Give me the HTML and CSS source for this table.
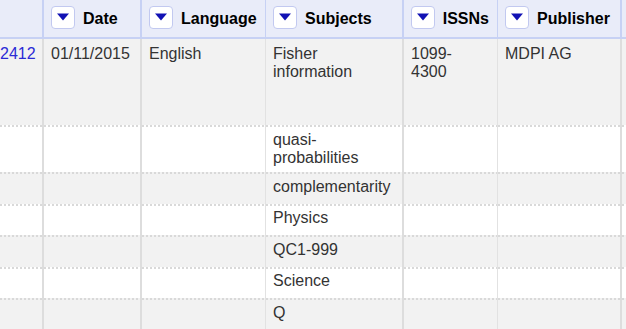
FILE: index.html
```html
<!DOCTYPE html>
<html>
<head>
<meta charset="utf-8">
<link rel="stylesheet" href="styles.css">
</head>
<body>
<div class="viewport">
<table class="data-table">
  <colgroup>
    <col class="w0"><col class="w1"><col class="w2"><col class="w3"><col class="w4"><col class="w5"><col class="w6">
  </colgroup>
  <thead>
    <tr>
      <th class="thick"></th>
      <th class="thick"><div class="head"><span class="menu-btn"><svg width="14" height="8" viewBox="0 0 14 8"><path d="M1 0.5 L13 0.5 L7 7.5 Z" fill="#1212b4"/></svg></span><span>Date</span></div></th>
      <th class="thin"><div class="head"><span class="menu-btn"><svg width="14" height="8" viewBox="0 0 14 8"><path d="M1 0.5 L13 0.5 L7 7.5 Z" fill="#1212b4"/></svg></span><span>Language</span></div></th>
      <th class="thick"><div class="head"><span class="menu-btn"><svg width="14" height="8" viewBox="0 0 14 8"><path d="M1 0.5 L13 0.5 L7 7.5 Z" fill="#1212b4"/></svg></span><span>Subjects</span></div></th>
      <th class="thin"><div class="head"><span class="menu-btn"><svg width="14" height="8" viewBox="0 0 14 8"><path d="M1 0.5 L13 0.5 L7 7.5 Z" fill="#1212b4"/></svg></span><span>ISSNs</span></div></th>
      <th class="thick"><div class="head"><span class="menu-btn"><svg width="14" height="8" viewBox="0 0 14 8"><path d="M1 0.5 L13 0.5 L7 7.5 Z" fill="#1212b4"/></svg></span><span>Publisher</span></div></th>
      <th class="thin"></th>
    </tr>
  </thead>
  <tbody>
    <tr class="odd first">
      <td class="thick id"><a href="#">2412</a></td>
      <td class="thick">01/11/2015</td>
      <td class="thin">English</td>
      <td class="thick">Fisher information</td>
      <td class="thin issn">1099-4300</td>
      <td class="thick">MDPI AG</td>
      <td class="thin"></td>
    </tr>
    <tr class="even">
      <td class="thick"></td><td class="thick"></td><td class="thin"></td>
      <td class="thick">quasi-probabilities</td>
      <td class="thin issn"></td><td class="thick"></td><td class="thin"></td>
    </tr>
    <tr class="odd">
      <td class="thick"></td><td class="thick"></td><td class="thin"></td>
      <td class="thick">complementarity</td>
      <td class="thin issn"></td><td class="thick"></td><td class="thin"></td>
    </tr>
    <tr class="even">
      <td class="thick"></td><td class="thick"></td><td class="thin"></td>
      <td class="thick">Physics</td>
      <td class="thin issn"></td><td class="thick"></td><td class="thin"></td>
    </tr>
    <tr class="odd">
      <td class="thick"></td><td class="thick"></td><td class="thin"></td>
      <td class="thick">QC1-999</td>
      <td class="thin issn"></td><td class="thick"></td><td class="thin"></td>
    </tr>
    <tr class="even">
      <td class="thick"></td><td class="thick"></td><td class="thin"></td>
      <td class="thick">Science</td>
      <td class="thin issn"></td><td class="thick"></td><td class="thin"></td>
    </tr>
    <tr class="odd">
      <td class="thick"></td><td class="thick"></td><td class="thin"></td>
      <td class="thick">Q</td>
      <td class="thin issn"></td><td class="thick"></td><td class="thin"></td>
    </tr>
  </tbody>
</table>
</div>
</body>
</html>
```

FILE: styles.css
```css
html, body {
  margin: 0;
  padding: 0;
  background: #ffffff;
}

.viewport {
  width: 626px;
  height: 329px;
  overflow: hidden;
}

.data-table {
  border-collapse: separate;
  border-spacing: 0;
  table-layout: fixed;
  width: 700px;
  font-family: "Liberation Sans", Arial, sans-serif;
  font-size: 16px;
  color: #333333;
}

.w0 { width: 44px; }
.w1 { width: 98px; }
.w2 { width: 124px; }
.w3 { width: 138px; }
.w4 { width: 94px; }
.w5 { width: 124px; }
.w6 { width: 78px; }

.data-table th {
  height: 37px;
  padding: 0 8px 0 7px;
  background: #e9ecf9;
  border-bottom: 2px solid #c7d1f4;
  text-align: left;
  font-weight: bold;
  color: #000000;
  white-space: nowrap;
  overflow: hidden;
}

.data-table th.thick { border-right: 2px solid #c7d1f4; }
.data-table th.thin { border-right: 1px solid #c7d1f4; }

.head {
  display: flex;
  align-items: center;
  gap: 8px;
}

.menu-btn {
  display: flex;
  align-items: center;
  justify-content: center;
  width: 22px;
  height: 21px;
  border: 1px solid #c2c9f0;
  border-radius: 4px;
  background: #ffffff;
  margin-top: -3px;
}

.data-table td {
  box-sizing: border-box;
  height: 31.5px;
  vertical-align: top;
  padding: 5.5px 8px 5.5px 7px;
  line-height: normal;
  background-repeat: no-repeat;
  background-position: left top;
  background-size: 100% 2px;
  background-image: repeating-linear-gradient(90deg, #d9d9d9 0 2px, transparent 2px 4px);
}

.data-table tr.first td {
  background-image: none;
  height: 86px;
}

.data-table td.thick { border-right: 2px solid #dddddd; }
.data-table td.thin { border-right: 1px solid #e2e2e2; }

.data-table td.issn { padding-right: 12px; }

.data-table tr.odd td { background-color: #f2f2f2; }
.data-table tr.even td { background-color: #ffffff; }

.data-table td.id {
  padding-left: 0;
  padding-right: 0;
  white-space: nowrap;
  overflow: hidden;
}

.data-table td.id a {
  color: #2b2bd6;
  text-decoration: none;
}
```
